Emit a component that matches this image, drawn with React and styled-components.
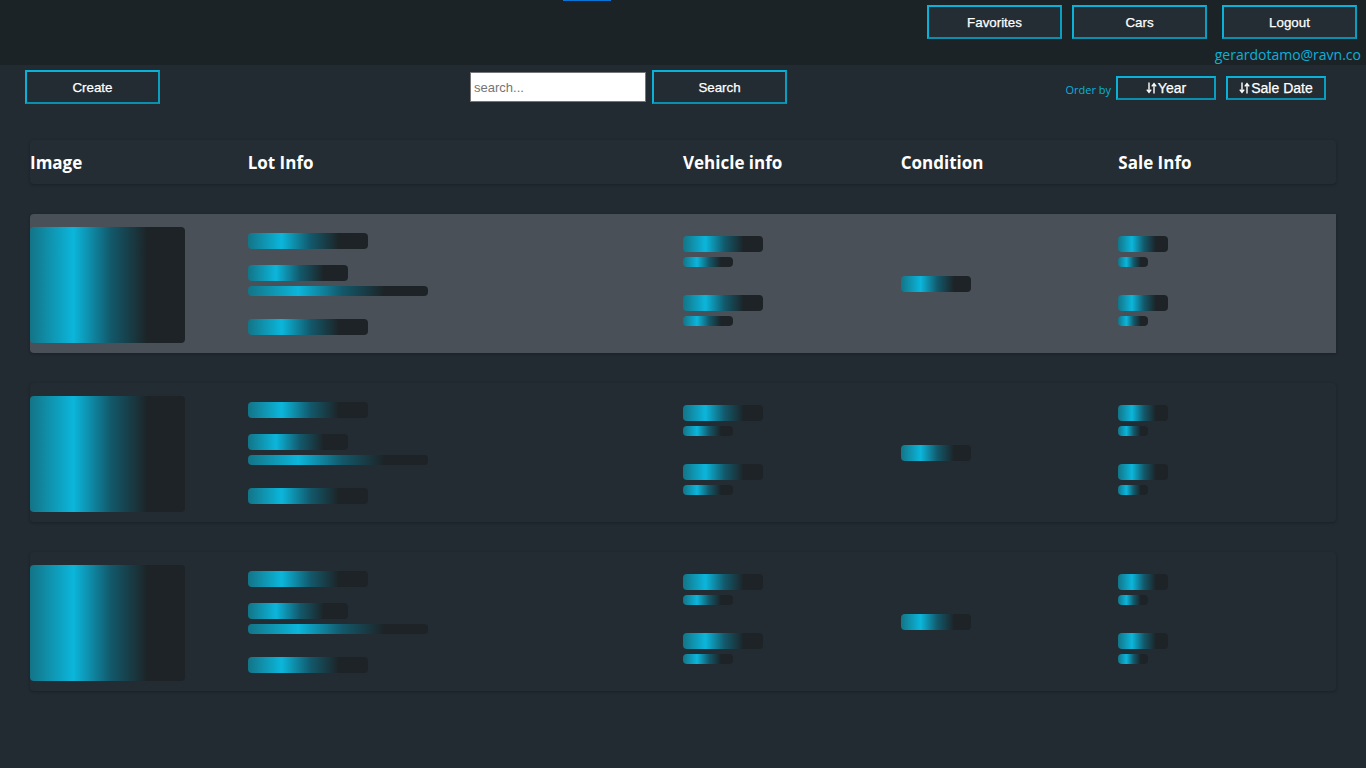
import React from "react";
import styled, { createGlobalStyle } from "styled-components";

const GlobalStyle = createGlobalStyle`
  body {
    margin: 0;
    background: #222b31;
    font-family: "Liberation Sans", Arial, sans-serif;
  }
`;

const Page = styled.div`
  min-height: 768px;
  background: #222b31;
`;

const Navbar = styled.div`
  height: 65px;
  background: #1c2327;
  display: flex;
  flex-direction: column;
  align-items: flex-end;
  position: relative;
  box-sizing: border-box;
  padding: 5px 5px 0 0;
`;

const TopMark = styled.div`
  position: absolute;
  top: 0;
  left: 563px;
  width: 48px;
  height: 1px;
  background: #0a74d6;
`;

const NavButtons = styled.div`
  display: flex;
  padding-right: 4px;
`;

const Button = styled.button`
  width: ${(p) => p.$w || 135}px;
  height: ${(p) => p.$h || 34}px;
  margin-left: ${(p) => p.$ml || 0}px;
  background: ${(p) => p.$bg || "#222c32"};
  border: 2px solid #0bb1d6;
  border-bottom-color: #0a8fae;
  border-right-color: #0a9fc0;
  color: #ffffff;
  font-family: "Liberation Sans", Arial, sans-serif;
  font-size: ${(p) => p.$fs || 13.33}px;
  -webkit-text-stroke: 0.25px #ffffff;
  display: flex;
  align-items: center;
  justify-content: center;
  padding: 0;
  cursor: pointer;
`;

const Email = styled.div`
  margin-top: 7px;
  color: #0ab1d8;
  font-family: "Open Sans", sans-serif;
  font-size: 14px;
  line-height: 18px;
`;

const Toolbar = styled.div`
  display: flex;
  align-items: center;
  padding: 5px 40px 0 25px;
  height: 34px;
`;

const SearchGroup = styled.div`
  display: flex;
  align-items: center;
  margin-left: 310px;
  gap: 6px;
`;

const SearchInput = styled.input`
  width: 176px;
  height: 30px;
  box-sizing: border-box;
  border: 1px solid #767676;
  background: #ffffff;
  font-family: "Liberation Sans", Arial, sans-serif;
  font-size: 13px;
  padding: 0 3px;
  outline: none;
  &::placeholder {
    color: #757575;
  }
`;

const OrderGroup = styled.div`
  margin-left: auto;
  display: flex;
  align-items: center;
  padding-top: 2px;
`;

const OrderLabel = styled.span`
  color: #0ab1d8;
  font-family: "Open Sans", sans-serif;
  font-size: 11px;
  margin-right: 5px;
  margin-top: 2px;
`;

const SortIcon = () => (
  <svg width="11" height="12" viewBox="0 0 11 12" style={{ marginRight: 1 }}>
    <path d="M3 0.5 V10 M0.8 7.6 L3 10.4 L5.2 7.6" stroke="#fff" strokeWidth="1.4" fill="none" />
    <path d="M8 11.5 V2 M5.8 4.4 L8 1.6 L10.2 4.4" stroke="#fff" strokeWidth="1.4" fill="none" />
  </svg>
);

const Table = styled.div`
  margin: 36px 30px 0 30px;
`;

const HeaderCard = styled.div`
  display: grid;
  grid-template-columns: 1fr 2fr 1fr 1fr 1fr;
  align-items: center;
  height: 44px;
  background: #232d33;
  border-radius: 4px;
  box-shadow: 0 1px 3px rgba(0, 0, 0, 0.25);
`;

const HeadCell = styled.div`
  color: #ffffff;
  font-family: "Open Sans", sans-serif;
  font-weight: 700;
  font-size: 17px;
`;

const Row = styled.div`
  display: grid;
  grid-template-columns: 1fr 2fr 1fr 1fr 1fr;
  align-items: center;
  height: 139px;
  margin-top: 30px;
  background: ${(p) => (p.$active ? "#4a5058" : "#222c32")};
  border-radius: ${(p) => (p.$active ? "4px 0 0 4px" : "4px")};
  box-shadow: 0 1px 3px rgba(0, 0, 0, 0.25);
`;

const Cell = styled.div`
  display: flex;
  flex-direction: column;
  align-items: flex-start;
  padding-top: ${(p) => p.$pt || 0}px;
  padding-bottom: ${(p) => p.$pb || 0}px;
`;

const Skeleton = styled.div`
  width: ${(p) => p.$w}px;
  height: ${(p) => p.$h}px;
  margin-top: ${(p) => p.$mt || 0}px;
  border-radius: 4px;
  background: linear-gradient(
    90deg,
    #137487 0%,
    #0bb6db 28%,
    #12596b 52%,
    #1d2326 76%,
    #1d2326 100%
  );
`;

const SkeletonRow = ({ active }) => (
  <Row $active={active}>
    <Cell $pt={2}>
      <Skeleton $w={155} $h={116} />
    </Cell>
    <Cell>
      <Skeleton $w={120} $h={16} />
      <Skeleton $w={100} $h={16} $mt={16} />
      <Skeleton $w={180} $h={10} $mt={5} />
      <Skeleton $w={120} $h={16} $mt={23} />
    </Cell>
    <Cell $pb={6}>
      <Skeleton $w={80} $h={16} />
      <Skeleton $w={50} $h={10} $mt={5} />
      <Skeleton $w={80} $h={16} $mt={28} />
      <Skeleton $w={50} $h={10} $mt={5} />
    </Cell>
    <Cell>
      <Skeleton $w={70} $h={16} />
    </Cell>
    <Cell $pb={6}>
      <Skeleton $w={50} $h={16} />
      <Skeleton $w={30} $h={10} $mt={5} />
      <Skeleton $w={50} $h={16} $mt={28} />
      <Skeleton $w={30} $h={10} $mt={5} />
    </Cell>
  </Row>
);

const App = () => {
  const heads = ["Image", "Lot Info", "Vehicle info", "Condition", "Sale Info"];
  return (
    <Page>
      <GlobalStyle />
      <Navbar>
        <TopMark />
        <NavButtons>
          <Button $w={135} $bg="#232d33">Favorites</Button>
          <Button $w={135} $ml={10} $bg="#232d33">Cars</Button>
          <Button $w={135} $ml={15} $bg="#232d33">Logout</Button>
        </NavButtons>
        <Email>gerardotamo@ravn.co</Email>
      </Navbar>

      <Toolbar>
        <Button $w={135}>Create</Button>
        <SearchGroup>
          <SearchInput placeholder="search..." />
          <Button $w={135}>Search</Button>
        </SearchGroup>
        <OrderGroup>
          <OrderLabel>Order by</OrderLabel>
          <Button $w={100} $h={24} $fs={14}>
            <SortIcon />
            Year
          </Button>
          <Button $w={100} $h={24} $ml={10} $fs={14}>
            <SortIcon />
            Sale Date
          </Button>
        </OrderGroup>
      </Toolbar>

      <Table>
        <HeaderCard>
          {heads.map((h) => (
            <HeadCell key={h}>{h}</HeadCell>
          ))}
        </HeaderCard>
        {[0, 1, 2].map((i) => (
          <SkeletonRow key={i} active={i === 0} />
        ))}
      </Table>
    </Page>
  );
};

export default App;
